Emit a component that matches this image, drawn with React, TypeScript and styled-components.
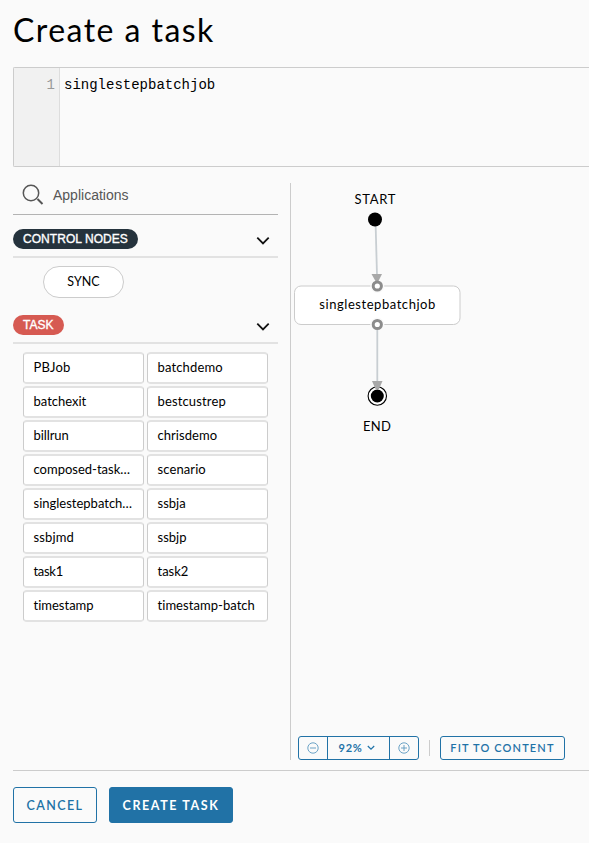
import React from "react";
import styled, { createGlobalStyle } from "styled-components";

const Global = createGlobalStyle`
  * { box-sizing: border-box; }
  html, body { margin: 0; height: 843px; overflow: hidden; background: #fafafa; }
  body {
    font-family: Lato, "Open Sans", sans-serif;
    font-variant-ligatures: none;
    color: #000;
  }
  button { font-family: inherit; padding: 0; margin: 0; }
`;

const Page = styled.main`
  display: flex;
  flex-direction: column;
  height: 843px;
  padding-left: 13px;
  overflow: hidden;
`;

const Title = styled.h1`
  margin: 0;
  height: 67px;
  padding-top: 12px;
  font-weight: 400;
  font-size: 32px;
  line-height: 36px;
  letter-spacing: 1.45px;
`;

const Editor = styled.section`
  display: flex;
  flex: none;
  height: 100px;
  border: 1px solid #ccc;
  border-right: 0;
  border-radius: 2px 0 0 2px;
  font: 14px/18px "Liberation Mono", monospace;
`;

const Gutter = styled.div`
  width: 46px;
  padding: 8px 4px 0 0;
  border-right: 1px solid #ddd;
  background: #f1f1f1;
  color: #999;
  text-align: right;
`;

const Code = styled.div`
  padding: 8px 0 0 4px;
`;

const Workspace = styled.section`
  display: flex;
  flex: none;
  height: 577px;
  margin-top: 16px;
`;

const Palette = styled.aside`
  width: 265px;
  flex: none;
  margin-right: 12px;
`;

const Search = styled.div`
  display: flex;
  height: 32px;
  margin-bottom: 14px;
  padding-left: 9px;
  border-bottom: 1px solid #b3b3b3;
  color: #565656;
  font: 14px/24px "Liberation Sans", sans-serif;

  svg { margin-right: 9px; flex: none; }
`;

const GroupHeader = styled.header`
  display: flex;
  justify-content: space-between;
  height: 29px;
  padding-right: 8px;
  border-bottom: 2px solid #e2e2e2;

  svg { margin-top: 7px; }
`;

const Pill = styled.span<{ $color: string }>`
  height: 20px;
  padding: 0 10px;
  border-radius: 10px;
  background: ${(p) => p.$color};
  color: #fff;
  font: 12px/20px "Liberation Sans", sans-serif;
  letter-spacing: 0.05px;
  -webkit-text-stroke: 0.35px #fff;
`;

const SyncRow = styled.div`
  height: 57px;
  padding: 8px 0 0 30px;
`;

const SyncNode = styled.div`
  width: 81px;
  height: 32px;
  border: 1px solid #ccc;
  border-radius: 16px;
  background: #fff;
  font-size: 12.5px;
  line-height: 30px;
  text-align: center;
`;

const Tiles = styled.div`
  display: grid;
  grid-template-columns: 121px 121px;
  grid-auto-rows: 32px;
  gap: 2px 3px;
  padding: 8px 0 0 10px;
`;

const Tile = styled.div<{ $track: number }>`
  padding-left: 9.5px;
  border: 1px solid #ccc;
  border-width: 2px 1px;
  border-color: #e2e2e2 #ccc;
  border-radius: 4px;
  background: #fff;
  font-size: 13px;
  line-height: 26px;
  white-space: nowrap;
  letter-spacing: ${(p) => p.$track}px;
`;

const Canvas = styled.div`
  display: flex;
  flex: 1;
  flex-direction: column;
  justify-content: space-between;
  border-left: 1px solid #ccc;
`;

const Controls = styled.div`
  display: flex;
  align-items: center;
  height: 24px;
  margin-left: 7px;
`;

const ZoomGroup = styled.div`
  display: flex;
  width: 121px;
  height: 24px;
  border: 1px solid #2172a6;
  border-radius: 3px;
`;

const ZoomButton = styled.button<{ $width: number }>`
  display: flex;
  align-items: center;
  justify-content: center;
  gap: 5px;
  width: ${(p) => p.$width}px;
  border: 0;
  background: none;
  color: #1f73a8;
  font-size: 11px;
  font-weight: 700;
  letter-spacing: 0.7px;

  & + & { border-left: 1px solid #2172a6; }
`;

const ZoomLevel = styled.span`
  margin-left: -3px;
  padding-bottom: 1px;
`;

const Separator = styled.div`
  width: 1px;
  height: 16px;
  margin: 0 10px;
  background: #ccc;
`;

const FitButton = styled.button`
  width: 125px;
  height: 24px;
  padding-bottom: 2px;
  border: 1px solid #2172a6;
  border-radius: 3px;
  background: none;
  color: #1f73a8;
  font-size: 11px;
  font-weight: 600;
  letter-spacing: 1.15px;
`;

const Footer = styled.footer`
  display: flex;
  gap: 12px;
  margin-top: 10px;
  padding-top: 16px;
  border-top: 1px solid #ccc;
`;

const ActionButton = styled.button<{ $primary?: boolean; $width: number }>`
  width: ${(p) => p.$width}px;
  height: 36px;
  border: 1px solid #2172a6;
  border-radius: 3px;
  background: ${(p) => (p.$primary ? "#2172a6" : "transparent")};
  color: ${(p) => (p.$primary ? "#fff" : "#2172a6")};
  font-size: 12.5px;
  font-weight: ${(p) => (p.$primary ? 700 : 600)};
  letter-spacing: ${(p) => (p.$primary ? 1.6 : 1.4)}px;
`;

const apps: [string, number][] = [
  ["PBJob", 0.2], ["batchdemo", 0.15],
  ["batchexit", 0], ["bestcustrep", 0.15],
  ["billrun", -0.1], ["chrisdemo", 0.05],
  ["composed-task…", 0], ["scenario", 0.1],
  ["singlestepbatch…", 0], ["ssbja", 0],
  ["ssbjmd", 0.15], ["ssbjp", 0],
  ["task1", -0.3], ["task2", 0],
  ["timestamp", 0], ["timestamp-batch", 0.05],
];

const Chevron = () => (
  <svg width="14" height="10" viewBox="0 0 14 10" fill="none" stroke="#111" strokeWidth="1.8">
    <path d="M1.3 1.7 7 7.4l5.7-5.7" />
  </svg>
);

const ZoomGlyph = ({ plus }: { plus?: boolean }) => (
  <svg width="12" height="12" viewBox="0 0 12 12" fill="none" stroke="#5b98c0" strokeWidth="0.9">
    <circle cx="6" cy="6" r="5.2" />
    <path d={plus ? "M3 6h6M6 3v6" : "M3 6h6"} />
  </svg>
);

const Graph = () => (
  <svg width="298" height="260" viewBox="291 183 298 260" fontSize="13" textAnchor="middle">
    <path d="M375.5 220 377 275" stroke="#c8ced2" strokeWidth="1.8" />
    <rect x="294.5" y="286" width="165.5" height="38.5" rx="6.5" fill="#fff" stroke="#ccc" />
    <circle cx="375" cy="219.5" r="7" />
    <g fill="#fafafa">
      <circle cx="377.3" cy="286" r="7" />
      <circle cx="377.3" cy="324.5" r="7" />
    </g>
    <path d="M371.5 274H382l-4 8h-2z" fill="#a8a8a8" />
    <path d="M377.3 330V382" stroke="#c8ced2" strokeWidth="1.8" />
    <g fill="#fff" stroke="#8c8c8c" strokeWidth="3">
      <circle cx="377.3" cy="286" r="4.1" />
      <circle cx="377.3" cy="324.5" r="4.1" />
    </g>
    <circle cx="377.3" cy="396" r="9.2" fill="#fff" stroke="#000" strokeWidth="1.1" />
    <path d="M372 381h10.5l-3.5 8h-3.5z" fill="#a8a8a8" />
    <circle cx="377.3" cy="396" r="6.5" />
    <text x="375" y="204" textLength="41">START</text>
    <text x="377.3" y="309" textLength="116">singlestepbatchjob</text>
    <text x="377" y="431" textLength="28">END</text>
  </svg>
);

export default function App() {
  return (
    <Page>
      <Global />
      <Title>Create a task</Title>
      <Editor>
        <Gutter>1</Gutter>
        <Code>singlestepbatchjob</Code>
      </Editor>
      <Workspace>
        <Palette>
          <Search>
            <svg width="22" height="24" viewBox="0 0 22 24" fill="none" stroke="#565656" strokeWidth="1.5">
              <circle cx="9" cy="10" r="7.7" />
              <path d="m15.5 16 5 5" strokeWidth="2" />
            </svg>
            Applications
          </Search>
          <GroupHeader>
            <Pill $color="#25333d">CONTROL NODES</Pill>
            <Chevron />
          </GroupHeader>
          <SyncRow>
            <SyncNode>SYNC</SyncNode>
          </SyncRow>
          <GroupHeader>
            <Pill $color="#d65a52">TASK</Pill>
            <Chevron />
          </GroupHeader>
          <Tiles>
            {apps.map(([name, track]) => (
              <Tile key={name} $track={track}>{name}</Tile>
            ))}
          </Tiles>
        </Palette>
        <Canvas>
          <Graph />
          <Controls>
            <ZoomGroup>
              <ZoomButton $width={28}><ZoomGlyph /></ZoomButton>
              <ZoomButton $width={62}>
                <ZoomLevel>92%</ZoomLevel>
                <svg width="8" height="6" viewBox="0 0 8 6" fill="none" stroke="#1f73a8" strokeWidth="1.2">
                  <path d="m.8 1 3.2 3.2L7.2 1" />
                </svg>
              </ZoomButton>
              <ZoomButton $width={29}><ZoomGlyph plus /></ZoomButton>
            </ZoomGroup>
            <Separator />
            <FitButton>FIT TO CONTENT</FitButton>
          </Controls>
        </Canvas>
      </Workspace>
      <Footer>
        <ActionButton $width={84}>CANCEL</ActionButton>
        <ActionButton $width={124} $primary>CREATE TASK</ActionButton>
      </Footer>
    </Page>
  );
}
